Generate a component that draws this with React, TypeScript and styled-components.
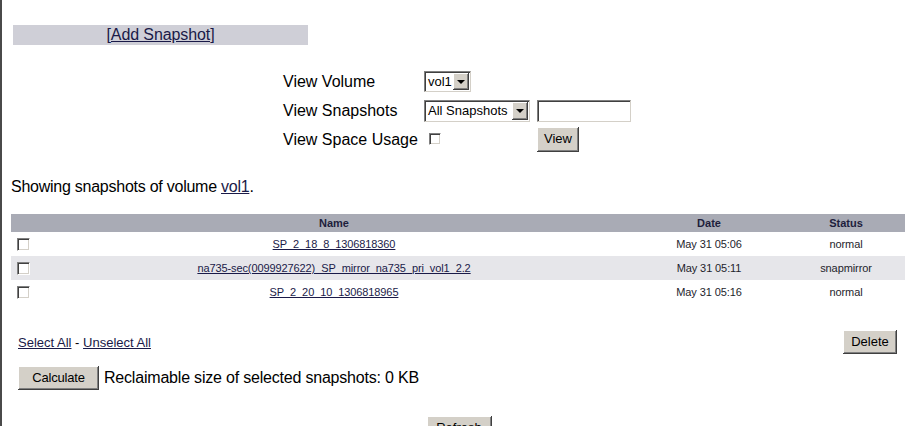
import React from "react";
import styled, { createGlobalStyle } from "styled-components";

const Global = createGlobalStyle`
  html, body { margin: 0; padding: 0; background: #fff; }
  body { font-family: "Liberation Sans", Arial, sans-serif; color: #000; }
`;

const Page = styled.div`
  border-left: 2px solid #4a4a4a;
  min-height: 426px;
  box-sizing: border-box;
  padding: 25px 0 0 9px;
  width: 924px;
`;

const Inner = styled.div`
  width: 894px;
`;

const AddBar = styled.div`
  margin-left: 2px;
  width: 295px;
  height: 20px;
  background: #cfcfd7;
  display: flex;
  align-items: center;
  justify-content: center;
  font-size: 16px;
  letter-spacing: -0.1px;
`;

const Link = styled.a`
  color: #1a1a48;
  text-decoration: underline;
  cursor: pointer;
`;

const Form = styled.div`
  margin: 22px 0 0 272px;
  display: grid;
  grid-template-columns: 141px 113px auto;
  grid-auto-rows: 29px;
  align-items: center;
  font-size: 16px;
`;

const Label = styled.div`
  white-space: nowrap;
`;

const SelectBox = styled.div<{ $w: number; $h: number }>`
  box-sizing: border-box;
  width: ${(p) => p.$w}px;
  height: ${(p) => p.$h}px;
  border-top: 1px solid #808080;
  border-left: 1px solid #808080;
  border-right: 1px solid #d4d0c8;
  border-bottom: 1px solid #d4d0c8;
  box-shadow: inset 1px 1px #404040;
  background: #fff;
  display: flex;
  align-items: stretch;
  font-size: 13px;
  padding: 1px 1px 1px 2px;
`;

const SelectText = styled.span`
  flex: 1;
  display: flex;
  align-items: center;
  padding-left: 1px;
  white-space: nowrap;
`;

const Arrow = styled.span`
  width: 16px;
  background: #d4d0c8;
  box-shadow: inset -1px -1px #404040, inset 1px 1px #fff, inset -2px -2px #808080;
  display: flex;
  align-items: center;
  justify-content: center;
  &::after {
    content: "";
    border-left: 4px solid transparent;
    border-right: 4px solid transparent;
    border-top: 4px solid #000;
    margin-top: 1px;
  }
`;

const TextInput = styled.div`
  box-sizing: border-box;
  width: 94px;
  height: 22px;
  border-top: 1px solid #808080;
  border-left: 1px solid #808080;
  border-right: 1px solid #d4d0c8;
  border-bottom: 1px solid #d4d0c8;
  box-shadow: inset 1px 1px #404040;
  background: #fff;
`;

const Check = styled.span<{ $ml?: number; $size?: number }>`
  display: inline-block;
  box-sizing: border-box;
  width: ${(p) => p.$size ?? 13}px;
  height: ${(p) => p.$size ?? 13}px;
  margin-left: ${(p) => p.$ml ?? 0}px;
  border-top: 1px solid #808080;
  border-left: 1px solid #808080;
  border-right: 1px solid #ffffff;
  border-bottom: 1px solid #ffffff;
  box-shadow: inset 1px 1px #404040, inset -1px -1px #d4d0c8;
  background: #fff;
`;

const Button = styled.div<{ $w: number; $h?: number }>`
  box-sizing: border-box;
  width: ${(p) => p.$w}px;
  height: ${(p) => p.$h ?? 24}px;
  background: #d4d0c8;
  box-shadow: inset -1px -1px #404040, inset 1px 1px #fff, inset -2px -2px #808080;
  display: inline-flex;
  align-items: center;
  justify-content: center;
  font-size: 13px;
  padding-bottom: 2px;
  color: #000;
`;

const Showing = styled.div`
  margin-top: 23px;
  font-size: 16px;
  line-height: 20px;
  letter-spacing: -0.25px;
`;

const Table = styled.div`
  margin-top: 17px;
  display: grid;
  grid-template-columns: 26px 594px 156px 118px;
  font-size: 11px;
`;

const HeadCell = styled.div`
  background: #a9abb5;
  height: 18px;
  display: flex;
  align-items: center;
  justify-content: center;
  font-weight: bold;
  color: #1e1e3c;
`;

const Cell = styled.div<{ $alt: boolean; $left?: boolean }>`
  background: ${(p) => (p.$alt ? "#e6e6ea" : "#fff")};
  height: 24px;
  display: flex;
  align-items: center;
  justify-content: ${(p) => (p.$left ? "flex-start" : "center")};
  padding-left: ${(p) => (p.$left ? "6px" : "0")};
  color: #1e1e2c;
  white-space: nowrap;
  letter-spacing: -0.1px;
`;

const Actions = styled.div`
  margin-top: 26px;
  padding: 0 8px 0 7px;
  display: flex;
  justify-content: space-between;
  align-items: center;
  font-size: 13px;
`;

const CalcRow = styled.div`
  margin-top: 12px;
  padding-left: 7px;
  display: flex;
  align-items: center;
  gap: 5px;
  font-size: 16px;
  letter-spacing: -0.2px;
`;

const Center = styled.div`
  margin-top: 26px;
  display: flex;
  justify-content: center;
  padding-left: 2px;
`;

const rows = [
  { name: "SP_2_18_8_1306818360", date: "May 31 05:06", status: "normal" },
  {
    name: "na735-sec(0099927622)_SP_mirror_na735_pri_vol1_2.2",
    date: "May 31 05:11",
    status: "snapmirror",
  },
  { name: "SP_2_20_10_1306818965", date: "May 31 05:16", status: "normal" },
];

export default function App() {
  return (
    <>
      <Global />
      <Page>
        <Inner>
          <AddBar>
            <Link>[Add Snapshot]</Link>
          </AddBar>
          <Form>
            <Label>View Volume</Label>
            <SelectBox $w={47} $h={21}>
              <SelectText>vol1</SelectText>
              <Arrow />
            </SelectBox>
            <div />
            <Label>View Snapshots</Label>
            <SelectBox $w={106} $h={22}>
              <SelectText>All Snapshots</SelectText>
              <Arrow />
            </SelectBox>
            <TextInput />
            <Label>View Space Usage</Label>
            <div>
              <Check $ml={5} $size={12} />
            </div>
            <Button $w={42} $h={25}>View</Button>
          </Form>
          <Showing>
            Showing snapshots of volume <Link>vol1</Link>.
          </Showing>
          <Table>
            <HeadCell />
            <HeadCell>Name</HeadCell>
            <HeadCell>Date</HeadCell>
            <HeadCell>Status</HeadCell>
            {rows.map((r, i) => (
              <React.Fragment key={r.name}>
                <Cell $alt={i % 2 === 1} $left>
                  <Check />
                </Cell>
                <Cell $alt={i % 2 === 1}>
                  <Link>{r.name}</Link>
                </Cell>
                <Cell $alt={i % 2 === 1}>{r.date}</Cell>
                <Cell $alt={i % 2 === 1}>{r.status}</Cell>
              </React.Fragment>
            ))}
          </Table>
          <Actions>
            <span>
              <Link>Select All</Link> - <Link>Unselect All</Link>
            </span>
            <Button $w={54}>Delete</Button>
          </Actions>
          <CalcRow>
            <Button $w={81}>Calculate</Button>
            <span>Reclaimable size of selected snapshots: 0 KB</span>
          </CalcRow>
          <Center>
            <Button $w={65}>Refresh</Button>
          </Center>
        </Inner>
      </Page>
    </>
  );
}
